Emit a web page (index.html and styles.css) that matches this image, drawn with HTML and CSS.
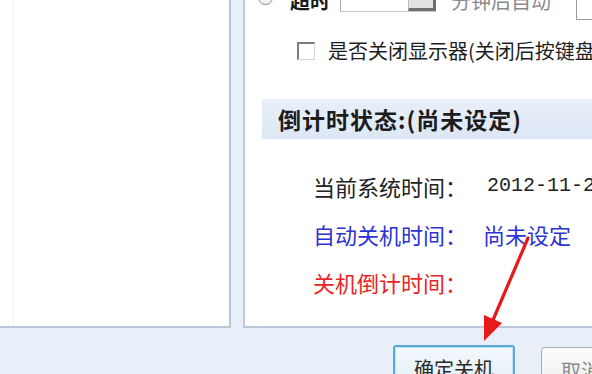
FILE: index.html
```html
<!DOCTYPE html>
<html lang="zh-CN">
<head>
<meta charset="utf-8">
<title>定时关机</title>
<link rel="stylesheet" href="styles.css">
</head>
<body>
<div class="window">
  <div class="panels">
    <div class="left-panel"><div class="left-inner"></div></div>
    <div class="right-panel">
      <div class="top-row">
        <span class="radio"></span>
        <span class="lbl-bold">超时</span>
        <span class="spin"><span class="spin-field"></span><span class="spin-btn"></span></span>
        <span class="lbl-grey">分钟后自动</span>
        <span class="combo"></span>
      </div>
      <div class="check-row">
        <span class="checkbox"></span>
        <span class="check-text">是否关闭显示器(关闭后按键盘任意键可唤醒)</span>
      </div>
      <div class="status-head">倒计时状态:(尚未设定)</div>
      <div class="status-grid">
        <span class="k">当前系统时间：</span><span class="v date">2012-11-20 10:15:32</span>
        <span class="k blue">自动关机时间：</span><span class="v blue">尚未设定</span>
        <span class="k red">关机倒计时间：</span><span class="v red"></span>
      </div>
    </div>
  </div>
  <div class="buttons">
    <button class="btn primary">确定关机</button>
    <button class="btn">取消</button>
  </div>
  <svg class="arrow" width="592" height="374" viewBox="0 0 592 374">
    <line x1="528" y1="238" x2="493" y2="320" stroke="#e8191b" stroke-width="3.2" stroke-linecap="round"/>
    <polygon points="484,341 502,323 484,315" fill="#e8191b"/>
  </svg>
</div>
</body>
</html>
```

FILE: styles.css
```css
* { box-sizing: border-box; }
html, body {
  margin: 0;
  padding: 0;
  width: 592px;
  height: 374px;
  overflow: hidden;
  background: #e9eff9;
  font-family: "Noto Sans CJK SC", "Noto Sans", sans-serif;
  color: #222;
}
.window {
  position: relative;
  width: 592px;
  height: 374px;
  overflow: hidden;
}
.panels {
  display: flex;
  height: 328px;
}
.left-panel {
  width: 231px;
  flex: none;
  background: #fff;
  border-right: 2px solid #b7c5da;
  border-bottom: 2px solid #b9c6d8;
  padding-left: 13px;
}
.left-inner {
  height: 100%;
  border-left: 1px solid #f1f3f7;
}
.right-panel {
  margin-left: 12px;
  flex: 1;
  min-width: 0;
  background: #fff;
  border-left: 2px solid #bccadf;
  border-bottom: 2px solid #b9c6d8;
  overflow: hidden;
  white-space: nowrap;
}
.top-row {
  display: flex;
  align-items: center;
  height: 30px;
  margin-top: -14px;
  padding-left: 13px;
  font-size: 20px;
}
.top-row > * { flex: none; }
.radio {
  align-self: flex-start;
  margin-top: 4px;
  width: 15px;
  height: 15px;
  border-radius: 50%;
  border: 1px solid #8b8b8b;
  background: #f4f4f4;
}
.lbl-bold {
  margin-left: 17px;
  font-weight: bold;
  color: #1a1a1a;
  line-height: 24px;
}
.spin {
  align-self: flex-start;
  display: flex;
  margin-left: 10px;
  width: 96px;
  height: 26px;
  border-left: 1px solid #a9a9a9;
  border-bottom: 1px solid #c8c8c8;
}
.spin-field { flex: 1; background: #fff; }
.spin-btn {
  width: 28px;
  background: #e2e2e2;
  border-left: 1px solid #bdbdbd;
  border-right: 3px solid #6f6f6f;
  border-bottom: 3px solid #6f6f6f;
}
.lbl-grey {
  margin-left: 15px;
  color: #8a8a8a;
  line-height: 24px;
}
.combo {
  align-self: flex-start;
  margin-left: 25px;
  width: 40px;
  height: 34px;
  border: 1px solid #9a9a9a;
}
.check-row {
  display: flex;
  align-items: center;
  margin-top: 23px;
  padding-left: 52px;
  height: 24px;
}
.checkbox {
  width: 18px;
  height: 18px;
  border-top: 2px solid #7d7d7d;
  border-left: 2px solid #7d7d7d;
  border-right: 1px solid #d6d6d6;
  border-bottom: 1px solid #d6d6d6;
  background: #fff;
  flex: none;
}
.check-text {
  margin-left: 13px;
  font-size: 20px;
  line-height: 24px;
  color: #1e1e1e;
}
.status-head {
  margin-top: 36px;
  margin-left: 17px;
  height: 40px;
  padding-left: 16px;
  background: linear-gradient(#e8eff9, #dde7f5);
  font-size: 23px;
  font-weight: bold;
  line-height: 40px;
  color: #1c1c1c;
  letter-spacing: 1px;
}
.status-grid {
  display: grid;
  grid-template-columns: 170px auto;
  row-gap: 22px;
  margin-top: 34px;
  padding-left: 68px;
  font-size: 22px;
  line-height: 26px;
}
.date {
  font-family: "Liberation Mono", monospace;
  font-size: 20px;
  color: #222;
  padding-left: 4px;
}
.blue { color: #2b33d3; }
.red { color: #ea2424; }
.buttons {
  display: flex;
  gap: 26px;
  padding-left: 393px;
  margin-top: 17px;
}
.btn {
  flex: none;
  height: 48px;
  padding: 0 18px;
  font-family: "Noto Sans CJK SC", "Noto Sans", sans-serif;
  font-size: 20px;
  line-height: 44px;
  color: #2a2a2a;
  background: linear-gradient(#fbfbfb, #ececec);
  border: 1px solid #acacac;
  border-radius: 3px;
  white-space: nowrap;
}
.btn.primary {
  width: 122px;
  border: 2px solid #5fa9d6;
  box-shadow: inset 0 0 0 1px #bfe3f6;
  background: linear-gradient(#f3f9fd, #e3eef6);
}
.btn:not(.primary) {
  margin-top: 2px;
  color: #8a8a8a;
  width: 80px;
}
.arrow {
  position: absolute;
  left: 0;
  top: 0;
  pointer-events: none;
}
```
